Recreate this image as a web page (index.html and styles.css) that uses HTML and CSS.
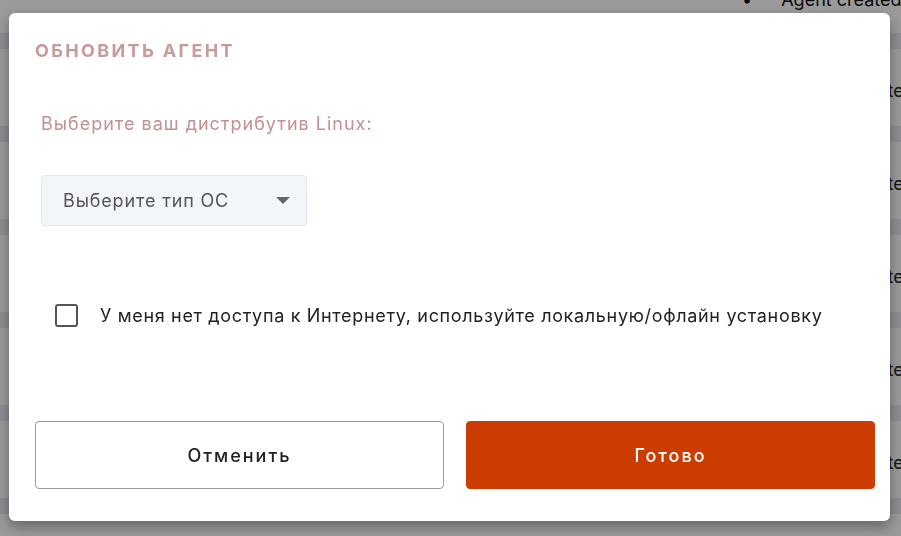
FILE: index.html
```html
<!DOCTYPE html>
<html lang="ru">
<head>
    <meta charset="UTF-8">
    <meta name="viewport" content="width=device-width, initial-scale=1.0">
    <title>Обновить агент</title>
    <link rel="stylesheet" href="styles.css">
</head>
<body>
    <div class="page">
        <div class="page-head"><span class="dot">•</span> Agent created</div>
        <div class="row"><span class="cell">Update</span></div>
        <div class="row"><span class="cell">Update</span></div>
        <div class="row"><span class="cell">Update</span></div>
        <div class="row"><span class="cell">Update</span></div>
        <div class="row"><span class="cell">Update</span></div>
        <div class="row row-last"></div>
    </div>

    <div class="overlay"></div>

    <div class="modal">
        <h2 class="modal-title">ОБНОВИТЬ АГЕНТ</h2>
        <p class="field-label">Выберите ваш дистрибутив Linux:</p>
        <div class="select">
            <span>Выберите тип ОС</span>
            <span class="caret"></span>
        </div>
        <label class="check">
            <span class="box"></span>
            У меня нет доступа к Интернету, используйте локальную/офлайн установку
        </label>
        <div class="actions">
            <button class="btn btn-cancel">Отменить</button>
            <button class="btn btn-done">Готово</button>
        </div>
    </div>
</body>
</html>
```

FILE: styles.css
```css
html, body {
    margin: 0;
    height: 536px;
    overflow: hidden;
}

body {
    font-family: Inter, "Noto Sans", sans-serif;
    background-color: #fafafa;
}

.page-head {
    height: 33px;
    padding-left: 742px;
    font-size: 18px;
    line-height: 0;
    color: #111;
    white-space: nowrap;
}

.dot {
    margin-right: 24px;
}

.row {
    height: 93px;
    border-top: 16px solid #e4e6ee;
    box-sizing: border-box;
}

.row-last {
    height: 38px;
}

.cell {
    display: block;
    padding: 31px 0 0 842px;
    font-size: 18px;
    color: #222;
    white-space: nowrap;
}

.overlay {
    position: fixed;
    inset: 0;
    background-color: #000;
    opacity: 0.38;
}

.modal {
    position: absolute;
    top: 13px;
    left: 9px;
    width: 881px;
    height: 508px;
    box-sizing: border-box;
    padding: 27px 15px 0 26px;
    background-color: white;
    border-radius: 6px;
    box-shadow: 0 6px 14px rgba(0, 0, 0, 0.35);
}

.modal-title {
    margin: 0;
    font-size: 18px;
    font-weight: 700;
    letter-spacing: 2.35px;
    color: #c89b9b;
}

.field-label {
    margin: 52px 0 0 6px;
    font-size: 18px;
    letter-spacing: 1px;
    color: #c59090;
}

.select {
    display: flex;
    align-items: center;
    justify-content: space-between;
    width: 266px;
    height: 51px;
    box-sizing: border-box;
    margin: 41px 0 0 6px;
    padding: 0 16px 0 21px;
    background-color: #f2f5fa;
    border: 1px solid #e2e5ea;
    border-radius: 4px;
    font-size: 18px;
    letter-spacing: 0.85px;
    color: #555;
}

.caret {
    width: 0;
    height: 0;
    border-left: 7px solid transparent;
    border-right: 7px solid transparent;
    border-top: 7px solid #666;
}

.check {
    display: flex;
    align-items: center;
    gap: 22px;
    margin: 78px 0 0 20px;
    font-size: 18px;
    letter-spacing: 0.67px;
    color: #222;
}

.box {
    width: 23px;
    height: 23px;
    box-sizing: border-box;
    border: 2px solid #555;
    border-radius: 3px;
}

.actions {
    display: flex;
    gap: 22px;
    margin-top: 94px;
}

.btn {
    flex: 1;
    height: 68px;
    border-radius: 4px;
    font-family: Inter, "Noto Sans", sans-serif;
    font-size: 18px;
    font-weight: 500;
    letter-spacing: 2px;
}

.btn-cancel {
    background-color: white;
    border: 1px solid #9a9a9a;
    color: #222;
}

.btn-done {
    background-color: #cc3c00;
    border: 1px solid #cc3c00;
    color: white;
}
```
